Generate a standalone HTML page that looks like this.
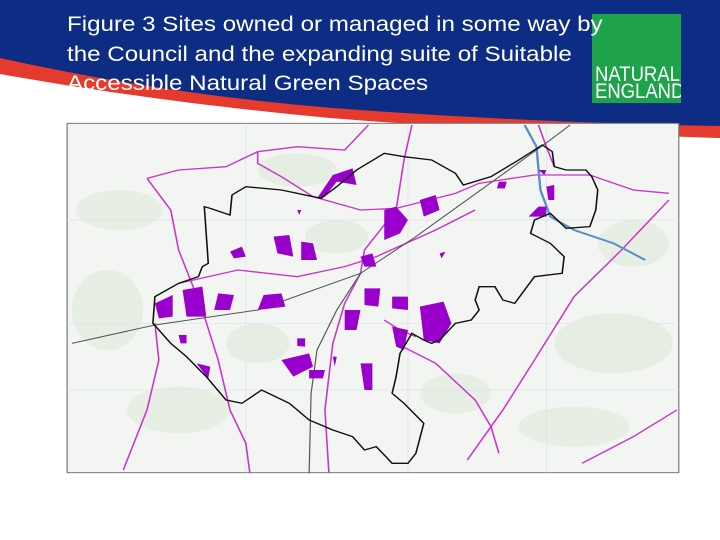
<!DOCTYPE html>
<html><head><meta charset="utf-8"><style>
html,body{margin:0;padding:0;background:#fff;width:720px;height:540px;overflow:hidden;position:relative;font-family:"Liberation Sans",sans-serif}
#hdr{position:absolute;left:0;top:0}
#title{position:absolute;left:67px;top:10px;color:#fff;font-size:21px;line-height:29.5px;white-space:nowrap;transform:scaleX(1.15);transform-origin:0 0;z-index:2}
#logo{position:absolute;left:592px;top:14px;width:89px;height:89px;background:#1fa34a;color:#fff;overflow:hidden}
#logo div{position:absolute;left:3px;top:52px;font-size:21px;line-height:17px;transform:scaleX(0.88);transform-origin:0 0;white-space:nowrap}
#map{position:absolute;left:60px;top:110px}
</style></head><body>
<svg id="hdr" width="720" height="140" viewBox="0 0 720 140">
<path d="M0 0H720V138C600 134 450 128 330 118C200 106 90 90 0 74Z" fill="#e53a2e"/>
<path d="M0 0H720V126C600 124 470 118 360 110C220 100 100 80 0 58Z" fill="#0d2d84"/>
</svg>
<div id="logo"><div>NATURAL<br>ENGLAND</div></div>
<div id="title">Figure 3 Sites owned or managed in some way by<br>the Council and the expanding suite of Suitable<br>Accessible Natural Green Spaces</div>
<svg id="map" width="620" height="370" viewBox="0 0 1568 1110" preserveAspectRatio="none">
<rect x="18" y="40" width="1547" height="1048" fill="#f3f5f2" stroke="#777" stroke-width="3"/>
<g fill="#dfeadb" opacity=".6">
<ellipse cx="150" cy="300" rx="110" ry="60"/><ellipse cx="120" cy="600" rx="90" ry="120"/>
<ellipse cx="300" cy="900" rx="130" ry="70"/><ellipse cx="1400" cy="700" rx="150" ry="90"/>
<ellipse cx="1300" cy="950" rx="140" ry="60"/><ellipse cx="600" cy="180" rx="100" ry="50"/>
<ellipse cx="1000" cy="850" rx="90" ry="60"/><ellipse cx="1450" cy="400" rx="90" ry="70"/>
<ellipse cx="700" cy="380" rx="80" ry="50"/><ellipse cx="500" cy="700" rx="80" ry="60"/>
</g>
<g stroke="#dde3ea" stroke-width="2">
<path d="M18 330H1565M18 640H1565M18 840H1565M470 40V1088M880 40V1088M1230 40V1088"/>
</g>
<g fill="none" stroke="#cc33cc" stroke-width="4">
<path d="M220 205L300 180L420 170L500 125L600 110L720 120L780 45"/>
<path d="M500 125L500 160L560 200L640 260L760 300L850 295L1000 250L1060 220L1200 195L1340 195L1450 240L1540 250"/>
<path d="M220 205L280 300L300 420L360 600L400 750L430 900L470 1000L480 1088"/>
<path d="M890 45L870 150L850 300L770 420L760 490L720 580L690 700L670 900L680 1088"/>
<path d="M1210 45L1230 110L1250 170"/>
<path d="M300 520L450 480L600 500L720 470L800 440L950 360L1050 300"/>
<path d="M160 1080L220 900L250 750L240 640"/>
<path d="M1540 270L1420 420L1300 560L1200 750L1120 900L1030 1050"/>
<path d="M850 700L950 760L1050 870L1090 950L1110 1030"/>
<path d="M1320 1060L1450 980L1560 900"/>
<path d="M820 630L860 660L900 680"/>
</g>
<path d="M1175 45L1205 110L1215 240L1240 320L1300 360L1400 400L1480 450" fill="none" stroke="#5a8fc8" stroke-width="6"/>
<g fill="none" stroke="#555" stroke-width="3">
<path d="M30 700L240 645L500 600L760 490L900 380L1240 90L1290 45"/>
<path d="M630 1090L635 850L650 720L700 600L760 490"/>
</g>
<g fill="#9900cc">
<path d="M650 265L690 195L740 175L750 225L700 215L670 260Z"/>
<path d="M240 580L285 555L285 620L250 625Z"/><path d="M310 540L360 530L370 620L320 620Z"/>
<path d="M400 550L440 555L430 600L390 600Z"/><path d="M515 555L560 550L570 590L500 600Z"/>
<path d="M430 425L460 410L470 440L440 445Z"/><path d="M540 380L580 375L590 440L550 430Z"/>
<path d="M610 395L640 400L650 450L610 450Z"/><path d="M820 300L850 290L880 330L860 370L820 390Z"/>
<path d="M910 270L950 255L960 300L920 320Z"/><path d="M760 440L790 430L800 470L770 470Z"/>
<path d="M770 535L810 535L805 590L770 585Z"/><path d="M840 560L880 560L880 600L840 595Z"/>
<path d="M910 590L970 575L990 640L960 700L920 690Z"/><path d="M840 650L880 660L870 720L850 710Z"/>
<path d="M760 760L790 760L790 840L770 840Z"/><path d="M560 750L630 730L640 770L590 800Z"/>
<path d="M630 780L670 780L665 805L630 805Z"/><path d="M600 685L620 685L620 710L600 708Z"/>
<path d="M300 675L320 675L320 700L305 700Z"/><path d="M345 760L380 770L375 805Z"/>
<path d="M1210 290L1230 290L1230 320L1185 320Z"/><path d="M1230 230L1250 225L1250 270L1235 270Z"/>
<path d="M1110 215L1130 215L1125 235L1105 235Z"/><path d="M960 430L975 425L965 445Z"/>
<path d="M720 600L760 600L750 660L720 660Z"/><path d="M690 740L700 740L695 770Z"/>
<path d="M600 300L610 300L605 315Z"/><path d="M1210 180L1230 180L1225 195Z"/>
</g>
<path d="M235 640L240 560L300 520L350 500L360 470L375 460L365 290L380 295L430 315L435 255L470 230L560 240L660 265L700 230L750 180L820 130L870 140L940 150L1000 190L1020 225L1090 200L1160 150L1220 105L1245 125L1250 170L1280 180L1330 180L1345 200L1360 240L1355 300L1340 350L1280 355L1240 310L1200 330L1190 370L1240 400L1275 440L1270 490L1200 500L1150 580L1120 570L1100 530L1060 530L1050 570L1060 600L1040 630L1000 640L960 690L940 700L920 690L890 670L860 730L850 800L840 850L870 880L920 940L900 1030L880 1060L840 1060L800 1010L770 1020L740 980L690 960L630 930L580 880L510 840L460 880L420 870L370 800L320 740L280 700Z" fill="none" stroke="#111" stroke-width="4"/>
</svg>
</body></html>
